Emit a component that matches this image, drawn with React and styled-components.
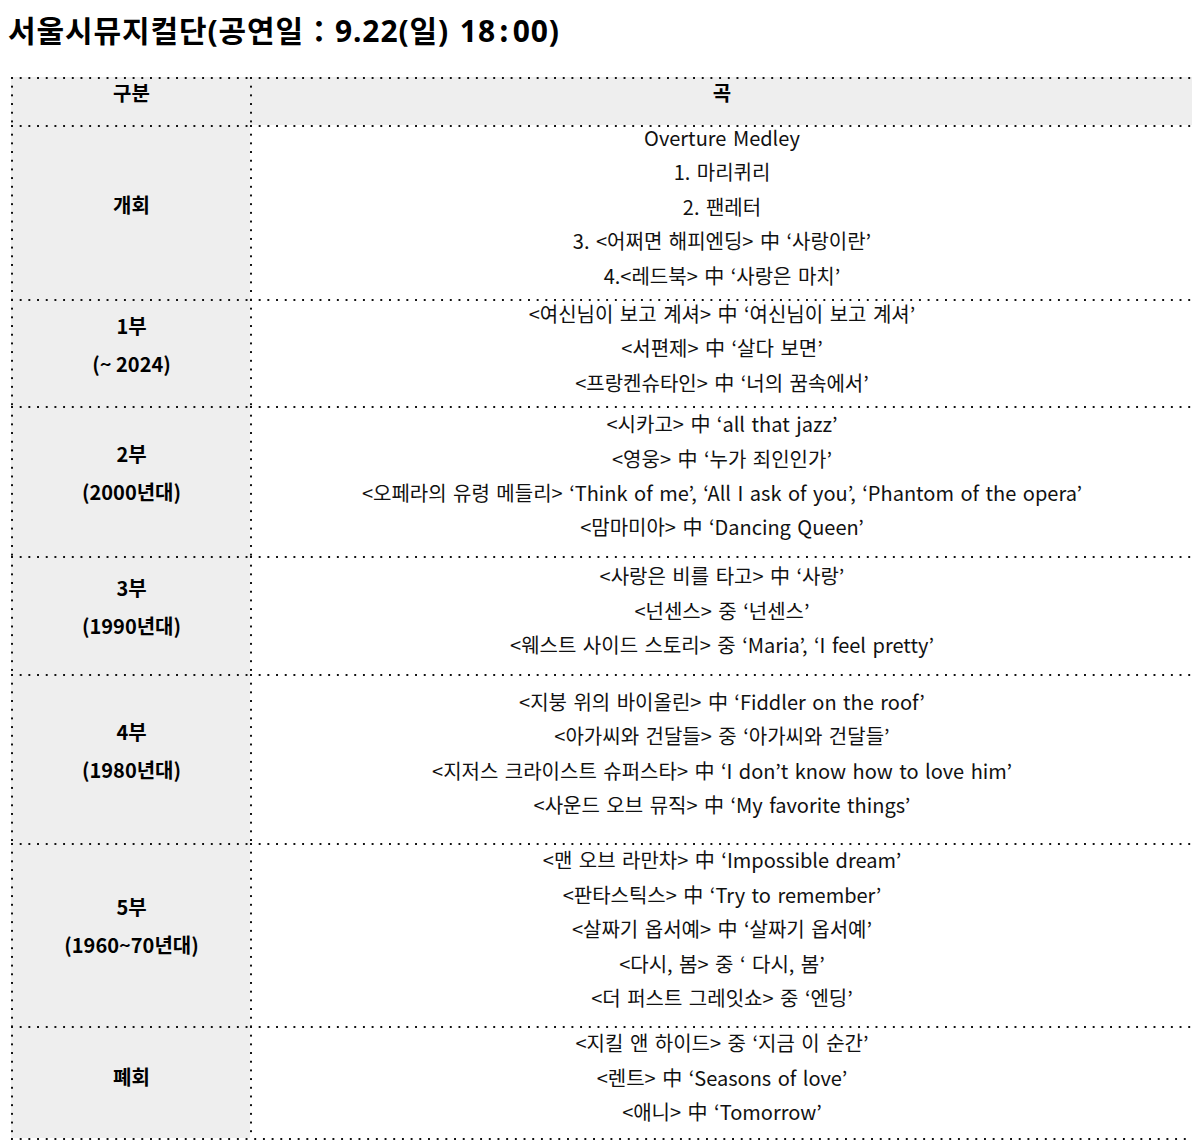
import React from "react";
import styled, { createGlobalStyle } from "styled-components";

const Global = createGlobalStyle`
  html, body { background: #fff; }
  body {
    margin: 8px;
    font-family: "Noto Sans CJK KR", "Noto Sans", sans-serif;
    color: #111;
  }
`;

const DOT = "#111";
const PITCH = "8.7px";

const Title = styled.h1`
  margin: 0 0 25px;
  font-family: "Noto Sans", "Noto Sans CJK KR", sans-serif;
  font-size: 30px;
  line-height: 43px;
  font-weight: 700;
  color: #000;
  word-spacing: 2px;
  letter-spacing: 0.9px;
`;

const Colon = styled.span`
  font-family: "Noto Sans CJK KR", sans-serif;
  padding: 0 ${(p) => p.$pad}px;
`;

const Table = styled.div`
  margin-left: 3px;
  width: 1183px;
  box-sizing: border-box;
  padding: 0 2px 2px 0;
  background-image: linear-gradient(to bottom, ${DOT} 2px, transparent 2px),
    linear-gradient(to right, ${DOT} 2px, transparent 2px);
  background-size: 2px ${PITCH}, ${PITCH} 2px;
  background-repeat: repeat-y, repeat-x;
  background-position: right top, left bottom;
`;

const Row = styled.div`
  display: grid;
  grid-template-columns: 239px 1fr;
  grid-template-rows: minmax(0, 1fr);
  height: ${(p) => p.$h}px;
`;

const Cell = styled.div`
  box-sizing: border-box;
  min-height: 0;
  display: flex;
  flex-direction: column;
  justify-content: center;
  align-items: center;
  text-align: center;
  padding: 0 4px 0 6px;
  background-color: ${(p) => (p.$shaded ? "#eeeeee" : "#ffffff")};
  background-image: linear-gradient(to right, ${DOT} 2px, transparent 2px),
    linear-gradient(to bottom, ${DOT} 2px, transparent 2px);
  background-size: ${PITCH} 2px, 2px ${PITCH};
  background-repeat: repeat-x, repeat-y;
  background-position: left top, left top;
`;

const Lines = styled.div`
  flex-shrink: 0;
  display: flex;
  flex-direction: column;
  align-items: center;
  margin-bottom: ${(p) => p.$lift * 2}px;
`;

const Label = styled.p`
  margin: 0;
  font-size: 20px;
  font-weight: 700;
  line-height: 38px;
  color: #000;
  white-space: nowrap;
`;

const Song = styled.p`
  margin: 0;
  font-size: 20px;
  font-weight: 400;
  line-height: 34.4px;
  word-spacing: 2px;
  color: #111;
  white-space: nowrap;
`;

const rows = [
  {
    label: ["개회"],
    h: 174,
    labelLift: 7,
    songLift: 5,
    songs: [
      "Overture Medley",
      "1. 마리퀴리",
      "2. 팬레터",
      "3. <어쩌면 해피엔딩> 中 ‘사랑이란’",
      "4.<레드북> 中 ‘사랑은 마치’",
    ],
  },
  {
    label: ["1부", "(~ 2024)"],
    h: 107,
    labelLift: 8,
    songLift: 4,
    songs: [
      "<여신님이 보고 계셔> 中 ‘여신님이 보고 계셔’",
      "<서편제> 中 ‘살다 보면’",
      "<프랑켄슈타인> 中 ‘너의 꿈속에서’",
    ],
  },
  {
    label: ["2부", "(2000년대)"],
    h: 150,
    labelLift: 8,
    songLift: 5,
    songs: [
      "<시카고> 中 ‘all that jazz’",
      "<영웅> 中 ‘누가 죄인인가’",
      "<오페라의 유령 메들리> ‘Think of me’, ‘All I ask of you’, ‘Phantom of the opera’",
      "<맘마미아> 中 ‘Dancing Queen’",
    ],
  },
  {
    label: ["3부", "(1990년대)"],
    h: 118,
    labelLift: 8,
    songLift: 4,
    songs: [
      "<사랑은 비를 타고> 中 ‘사랑’",
      "<넌센스> 중 ‘넌센스’",
      "<웨스트 사이드 스토리> 중 ‘Maria’, ‘I feel pretty’",
    ],
  },
  {
    label: ["4부", "(1980년대)"],
    h: 169,
    labelLift: 8,
    songLift: 5,
    songs: [
      "<지붕 위의 바이올린> 中 ‘Fiddler on the roof’",
      "<아가씨와 건달들> 중 ‘아가씨와 건달들’",
      "<지저스 크라이스트 슈퍼스타> 中 ‘I don’t know how to love him’",
      "<사운드 오브 뮤직> 中 ‘My favorite things’",
    ],
  },
  {
    label: ["5부", "(1960~70년대)"],
    h: 183,
    labelLift: 9,
    songLift: 5,
    songs: [
      "<맨 오브 라만차> 中 ‘Impossible dream’",
      "<판타스틱스> 中 ‘Try to remember’",
      "<살짜기 옵서예> 中 ‘살짜기 옵서예’",
      "<다시, 봄> 중 ‘ 다시, 봄’",
      "<더 퍼스트 그레잇쇼> 중 ‘엔딩’",
    ],
  },
  {
    label: ["폐회"],
    h: 112,
    labelLift: 5,
    songLift: 4,
    songs: [
      "<지킬 앤 하이드> 중 ‘지금 이 순간’",
      "<렌트> 中 ‘Seasons of love’",
      "<애니> 中 ‘Tomorrow’",
    ],
  },
];

export default function App() {
  return (
    <>
      <Global />
      <Title>
        서울시뮤지컬단(공연일<Colon $pad={0}>：</Colon>9.22(일) 18<Colon $pad={3}>:</Colon>00)
      </Title>
      <Table>
        <Row $h={48}>
          <Cell $shaded>
            <Lines $lift={8}>
              <Label>구분</Label>
            </Lines>
          </Cell>
          <Cell $shaded>
            <Lines $lift={8}>
              <Label>곡</Label>
            </Lines>
          </Cell>
        </Row>
        {rows.map((r, i) => (
          <Row key={i} $h={r.h}>
            <Cell $shaded>
              <Lines $lift={r.labelLift}>
                {r.label.map((l, j) => (
                  <Label key={j}>{l}</Label>
                ))}
              </Lines>
            </Cell>
            <Cell>
              <Lines $lift={r.songLift}>
                {r.songs.map((s, j) => (
                  <Song key={j}>{s}</Song>
                ))}
              </Lines>
            </Cell>
          </Row>
        ))}
      </Table>
    </>
  );
}
